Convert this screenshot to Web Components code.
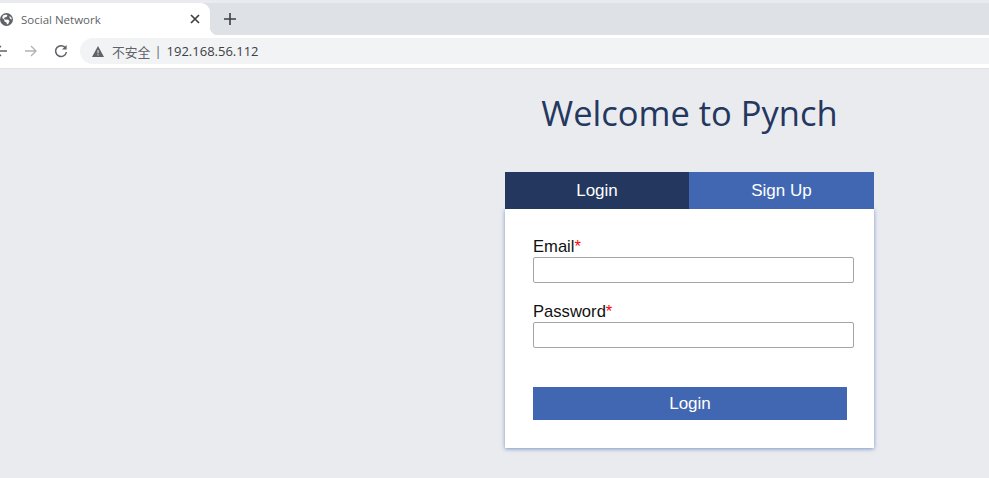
<!DOCTYPE html>
<html lang="en">
<head>
<meta charset="utf-8">
<title>Social Network</title>
<style>
  html, body { margin: 0; height: 100%; overflow: hidden; background: #e9ebef; }
  body { display: flex; flex-direction: column; font-family: "Liberation Sans", Arial, sans-serif; }
</style>
</head>
<body>
<browser-chrome address="192.168.56.112" tab-title="Social Network"></browser-chrome>
<login-page heading="Welcome to Pynch"></login-page>

<script>
class BrowserChrome extends HTMLElement {
  constructor() {
    super();
    this.shadowDOM = this.attachShadow({ mode: 'open' });
  }

  connectedCallback() {
    this.shadowDOM.innerHTML = `
      <style>
        :host {
          display: block;
          flex: none;
          font-family: "Open Sans", "Noto Sans", sans-serif;
        }
        .strip {
          margin-top: 3px;
          height: 32px;
          background: #dee1e6;
          display: flex;
        }
        .tab {
          width: 210px;
          box-sizing: border-box;
          background: #fff;
          border-top-right-radius: 9px;
          display: flex;
          align-items: center;
          padding: 0 10px 0 0;
          color: #5f6368;
          font-size: 11.5px;
          position: relative;
        }
        .tab::after {
          content: "";
          position: absolute;
          right: -8px;
          bottom: 0;
          width: 8px;
          height: 8px;
          background: radial-gradient(circle at 100% 0, transparent 8px, #fff 8.5px);
        }
        .tab svg.globe { margin: 0 8px 0 0; flex: none; }
        .tab span { flex: 1; }
        .tab svg.close { flex: none; }
        .plus { margin: 0 0 0 14px; align-self: center; display: flex; }
        .bar {
          height: 33px;
          background: #fff;
          border-bottom: 1px solid #dfe1e5;
          display: flex;
          align-items: center;
        }
        .nav { width: 80px; flex: none; overflow: hidden; position: relative; height: 100%; }
        .nav svg { position: absolute; top: 9px; }
        .omni {
          flex: 1;
          height: 26px;
          margin-top: -1px;
          background: #f1f3f4;
          border-radius: 13px 0 0 13px;
          display: flex;
          align-items: center;
          padding-left: 12px;
          font-size: 13px;
          color: #3c4043;
        }
        .omni svg { flex: none; margin-right: 8px; }
        .warn { color: #5f6368; font-family: "Noto Sans CJK SC", sans-serif; font-size: 12.8px; }
        .sep { color: #5f6368; margin: 0 5px 0 4px; }
      </style>
      <div class="strip">
        <div class="tab">
          <svg class="globe" width="13" height="13" viewBox="0 0 13 13"><circle cx="6.5" cy="6.5" r="6.5" fill="#5f6368"/><path d="M3 2.5l3-1 1.5 1-1 1.5-2 .5-.5 1.5 2 .8 2-.3 1.5 1.5-1 2.5-1.5 1-.5-2-2-1-.3-2-2-1.5z M9.5 3l1.8 1.5.7 2-1.5-.4-1-1.5z" fill="#fff"/></svg>
          <span>${this.getAttribute('tab-title')}</span>
          <svg class="close" width="10" height="10" viewBox="0 0 10 10"><path d="M1 1l8 8M9 1l-8 8" stroke="#3c4043" stroke-width="1.7"/></svg>
        </div>
        <div class="plus">
          <svg width="12" height="12" viewBox="0 0 12 12"><path d="M6 0v12M0 6h12" stroke="#3c4043" stroke-width="1.6"/></svg>
        </div>
      </div>
      <div class="bar">
        <div class="nav">
          <svg style="left:-6px" width="14" height="14" viewBox="0 0 14 14"><path d="M13 7H2M7 2L2 7l5 5" fill="none" stroke="#5f6368" stroke-width="1.4"/></svg>
          <svg style="left:24px" width="14" height="14" viewBox="0 0 14 14"><path d="M1 7h11M7 2l5 5-5 5" fill="none" stroke="#b0b3b8" stroke-width="1.4"/></svg>
          <svg style="left:54px" width="14" height="14" viewBox="0 0 14 14"><path d="M11.6 4.2A5.4 5.4 0 1 0 12.4 8" fill="none" stroke="#5f6368" stroke-width="1.5"/><path d="M12.6 1v4.6H8z" fill="#5f6368"/></svg>
        </div>
        <div class="omni">
          <svg width="12" height="11" viewBox="0 0 12 11"><path d="M6 0l6 11H0z" fill="#5f6368"/><path d="M6 4v3.4M6 8.3v1.2" stroke="#f1f3f4" stroke-width="1"/></svg>
          <span class="warn">不安全</span><span class="sep">|</span><span>${this.getAttribute('address')}</span>
        </div>
      </div>
    `;
  }
}
customElements.define('browser-chrome', BrowserChrome);

class FormField extends HTMLElement {
  constructor() {
    super();
    this.shadowDOM = this.attachShadow({ mode: 'open' });
  }

  connectedCallback() {
    this.shadowDOM.innerHTML = `
      <style>
        :host { display: block; }
        label { display: block; font-size: 16.6px; line-height: 20px; color: #111; }
        b { color: #f00; font-weight: normal; }
        input {
          display: block;
          width: 100%;
          height: 26px;
          box-sizing: border-box;
          border: 1px solid #a5a5a5;
          border-radius: 2px;
          background: #fff;
          margin: 0;
          padding: 0 4px;
        }
      </style>
      <label>${this.getAttribute('label')}<b>*</b></label>
      <input type="${this.getAttribute('type') || 'text'}">
    `;
  }
}
customElements.define('form-field', FormField);

class LoginPage extends HTMLElement {
  constructor() {
    super();
    this.shadowDOM = this.attachShadow({ mode: 'open' });
  }

  connectedCallback() {
    this.shadowDOM.innerHTML = `
      <style>
        :host {
          display: block;
          flex: 1;
          padding-left: 505px;
        }
        .column { width: 369px; }
        h1 {
          margin: 22px 0 37px;
          height: 44px;
          line-height: 44px;
          text-align: center;
          font-family: "Open Sans", "Noto Sans", sans-serif;
          font-weight: 400;
          font-size: 34.5px;
          color: #24385f;
        }
        .tabs { display: grid; grid-template-columns: 184px 185px; height: 37px; }
        .tabs div {
          display: flex;
          align-items: center;
          justify-content: center;
          color: #fff;
          font-size: 17px;
          background: #4267b2;
        }
        .tabs .active { background: #23375f; }
        .card {
          background: #fff;
          height: 239px;
          box-sizing: border-box;
          padding: 28px 20px 0 28px;
          box-shadow: 0 1px 4px rgba(66, 103, 178, .65);
          display: flex;
          flex-direction: column;
          gap: 19px;
        }
        button {
          display: block;
          width: 314px;
          height: 33px;
          margin-top: 20px;
          border: 0;
          background: #4267b2;
          color: #fff;
          font: 17px "Liberation Sans", Arial, sans-serif;
          padding: 0;
        }
      </style>
      <div class="column">
        <h1>${this.getAttribute('heading')}</h1>
        <div class="tabs"><div class="active">Login</div><div>Sign Up</div></div>
        <div class="card">
          <form-field label="Email" type="text"></form-field>
          <form-field label="Password" type="password"></form-field>
          <button>Login</button>
        </div>
      </div>
    `;
  }
}
customElements.define('login-page', LoginPage);
</script>
</body>
</html>
